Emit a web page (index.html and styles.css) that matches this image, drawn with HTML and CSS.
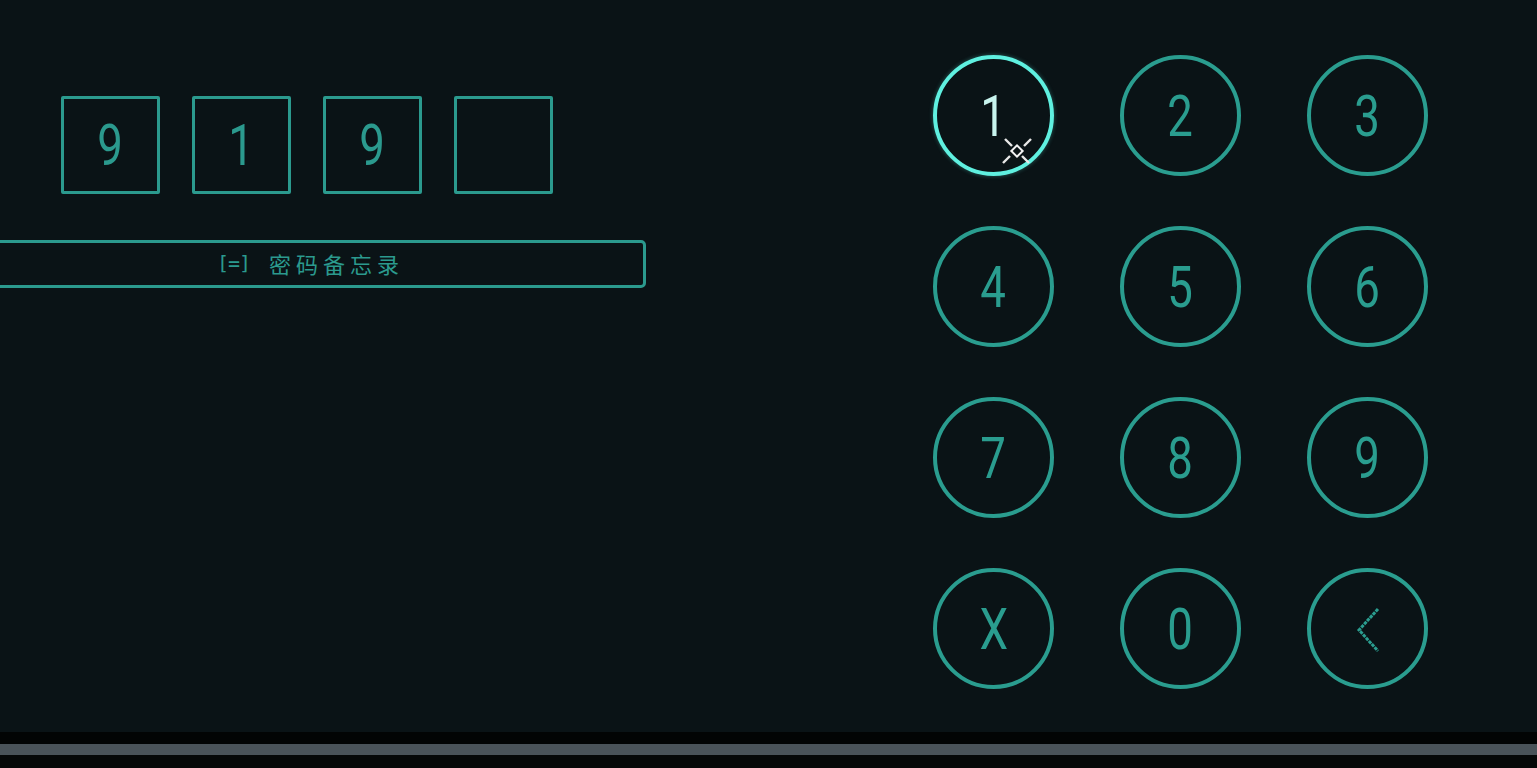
FILE: index.html
```html
<!DOCTYPE html>
<html lang="zh">
<head>
<meta charset="utf-8">
<title>密码锁</title>
<link rel="stylesheet" href="styles.css">
</head>
<body>
<div class="screen">
  <main class="stage">
    <section class="left">
      <div class="code-row">
        <div class="cell"><span class="digit">9</span></div>
        <div class="cell"><span class="digit">1</span></div>
        <div class="cell"><span class="digit">9</span></div>
        <div class="cell"></div>
      </div>
      <button class="memo"><span class="memo-icon">[=]</span><span class="memo-label">密码备忘录</span></button>
    </section>
    <section class="keypad">
      <button class="key active"><span class="digit">1</span></button>
      <button class="key"><span class="digit">2</span></button>
      <button class="key"><span class="digit">3</span></button>
      <button class="key"><span class="digit">4</span></button>
      <button class="key"><span class="digit">5</span></button>
      <button class="key"><span class="digit">6</span></button>
      <button class="key"><span class="digit">7</span></button>
      <button class="key"><span class="digit">8</span></button>
      <button class="key"><span class="digit">9</span></button>
      <button class="key"><span class="digit">X</span></button>
      <button class="key"><span class="digit">0</span></button>
      <button class="key">
        <svg class="chev" viewBox="0 0 24 46" width="24" height="46"><path d="M22 2 L3 23 L22 44" fill="none" stroke="#2a9d8f" stroke-width="3" stroke-dasharray="3.4 0.9"/></svg>
      </button>
      <svg class="cursor" viewBox="0 0 34 34" width="34" height="34">
        <g stroke="#e8e8e8" stroke-width="2.4" stroke-linecap="butt">
          <path d="M3 29 L10 22"/><path d="M24 12 L31 5"/><path d="M5 5 L12 12"/><path d="M22 22 L29 29"/>
        </g>
        <rect x="13" y="13" width="8" height="8" transform="rotate(45 17 17)" fill="none" stroke="#f2f2f2" stroke-width="2"/>
      </svg>
    </section>
  </main>
  <footer class="bottom">
    <div class="band-black"></div>
    <div class="band-grey"></div>
    <div class="band-dark"></div>
  </footer>
</div>
</body>
</html>
```
FILE: styles.css
```css
html, body {
  margin: 0;
  padding: 0;
  background: #0a1316;
  overflow: hidden;
}
.screen {
  width: 1537px;
  height: 768px;
  display: flex;
  flex-direction: column;
}
.stage {
  height: 732px;
  display: flex;
  align-items: flex-start;
  background: #0a1316;
}
.left {
  width: 676px;
  margin-left: -30px;
  padding-top: 96px;
  display: flex;
  flex-direction: column;
  align-items: center;
}
.code-row {
  display: flex;
  gap: 32px;
  margin-left: -3px;
}
.cell {
  width: 93px;
  height: 92px;
  border: 3px solid #2b9a8e;
  border-radius: 2px;
  display: flex;
  align-items: center;
  justify-content: center;
}
.digit {
  font-family: "Roboto", "DejaVu Sans", sans-serif;
  font-weight: 400;
  font-size: 57px;
  line-height: 1;
  color: #2b9a8e;
  display: inline-block;
  transform: scaleX(0.8);
}
.memo {
  margin-top: 46px;
  width: 676px;
  height: 48px;
  background: transparent;
  border: 3px solid #2b9a8e;
  border-radius: 5px;
  color: #2b9a8e;
  font-family: "Noto Sans CJK SC", sans-serif;
  font-size: 22px;
  padding: 0 0 3px 0;
  display: flex;
  align-items: center;
  justify-content: center;
}
.memo-icon {
  font-family: "DejaVu Sans Mono", monospace;
  font-size: 20px;
  letter-spacing: -1px;
  margin-right: 19px;
}
.memo-label {
  letter-spacing: 5px;
  margin-right: -5px;
}
.keypad {
  position: relative;
  margin-left: 287px;
  margin-top: 55px;
  display: grid;
  grid-template-columns: repeat(3, 121px);
  grid-auto-rows: 121px;
  column-gap: 66px;
  row-gap: 50px;
}
.key {
  width: 121px;
  height: 121px;
  box-sizing: border-box;
  border: 4px solid #2a9d8f;
  border-radius: 50%;
  background: transparent;
  display: flex;
  align-items: center;
  justify-content: center;
  padding: 0;
}
.key .digit {
  color: #2a9d8f;
  margin-top: 2px;
}
.key.active {
  border-color: #5ff0e0;
  box-shadow: 0 0 4px rgba(95, 240, 224, 0.35);
}
.key.active .digit {
  color: #c8f4ee;
}
.chev {
  display: block;
  margin-top: 2px;
}
.cursor {
  position: absolute;
  left: 67px;
  top: 79px;
}
.bottom {
  height: 36px;
  display: flex;
  flex-direction: column;
}
.band-black {
  height: 12px;
  background: #020404;
}
.band-grey {
  height: 11px;
  background: #4a5359;
}
.band-dark {
  height: 13px;
  background: #060808;
}
```
